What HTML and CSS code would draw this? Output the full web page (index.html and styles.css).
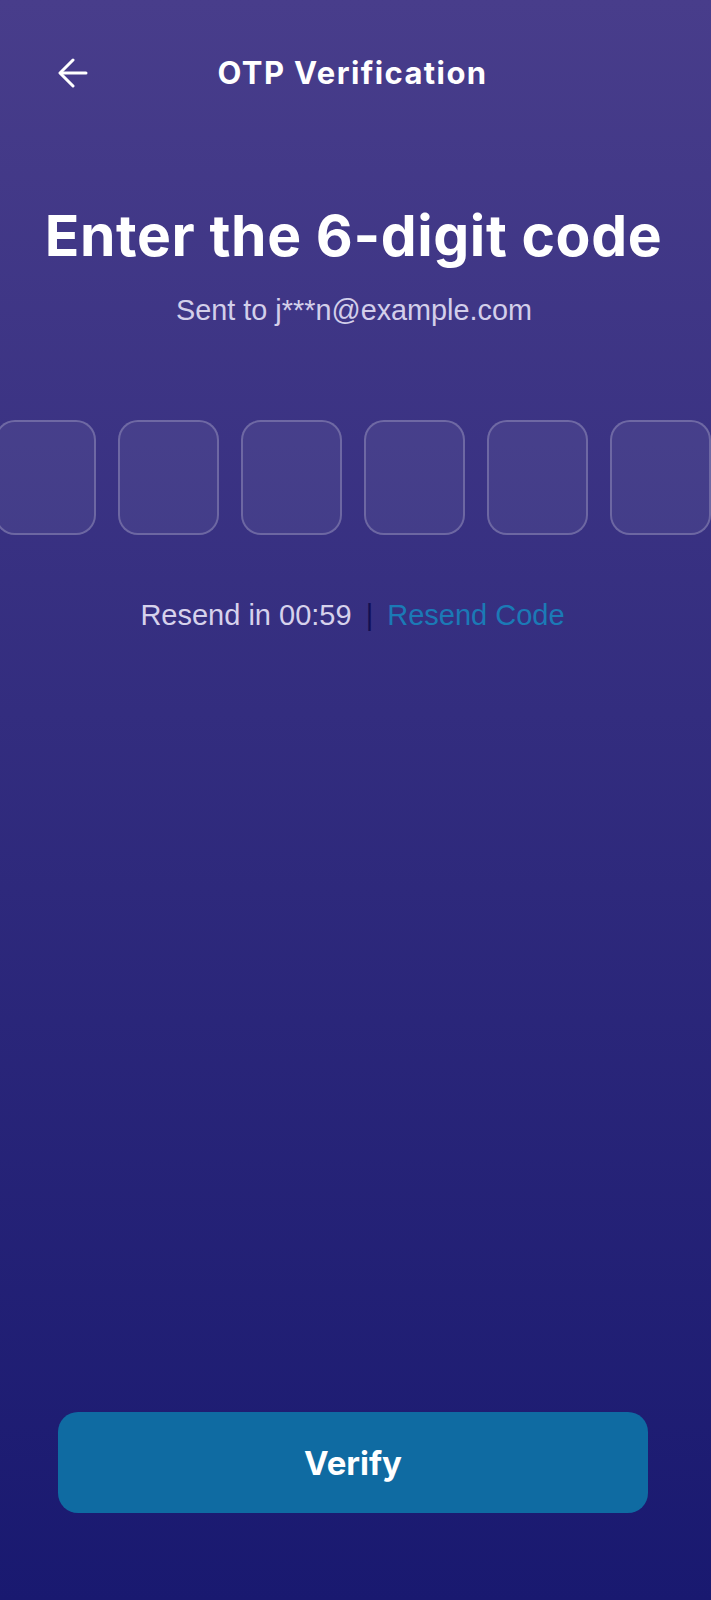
FILE: index.html
```html
<!DOCTYPE html>
<html lang="en">
<head>
<meta charset="utf-8">
<title>OTP Verification</title>
<link rel="stylesheet" href="styles.css">
</head>
<body>
<div class="screen">
  <header class="topbar">
    <button class="back" aria-label="Back">
      <svg width="30" height="30" viewBox="0 0 30 30" fill="none" stroke="#fff" stroke-width="3" stroke-linecap="round" stroke-linejoin="round">
        <path d="M28 15H3"/>
        <path d="M15 2L2 15l13 13"/>
      </svg>
    </button>
    <h1 class="topbar-title">OTP Verification</h1>
    <span class="spacer"></span>
  </header>

  <section class="intro">
    <h2 class="headline">Enter the 6-digit code</h2>
    <p class="sent">Sent to j***n@example.com</p>
  </section>

  <div class="otp-row">
    <div class="otp-box"></div>
    <div class="otp-box"></div>
    <div class="otp-box"></div>
    <div class="otp-box"></div>
    <div class="otp-box"></div>
    <div class="otp-box"></div>
  </div>

  <p class="resend">
    <span class="timer">Resend in 00:59</span>
    <span class="sep">|</span>
    <span class="resend-link">Resend Code</span>
  </p>

  <div class="grow"></div>

  <div class="footer">
    <button class="verify">Verify</button>
  </div>
</div>
</body>
</html>
```

FILE: styles.css
```css
html, body {
  margin: 0;
  padding: 0;
}
body {
  width: 711px;
  height: 1600px;
  overflow: hidden;
  font-family: "Liberation Sans", Arial, sans-serif;
}
.screen {
  height: 1600px;
  display: flex;
  flex-direction: column;
  background: linear-gradient(180deg, #483d8b 0%, #191970 100%);
  overflow: hidden;
}
.topbar {
  display: grid;
  grid-template-columns: 30px 1fr 30px;
  align-items: center;
  padding: 58px 58px 0 58px;
  height: 30px;
}
.back {
  width: 30px;
  height: 30px;
  padding: 0;
  border: 0;
  background: none;
  display: flex;
}
.topbar-title {
  margin: 0;
  text-align: center;
  color: #fff;
  font-family: Inter, "Noto Sans", sans-serif;
  font-weight: 700;
  font-size: 31px;
  line-height: 30px;
  letter-spacing: 1.4px;
  padding-right: 6px;
}
.intro {
  text-align: center;
  margin-top: 113px;
}
.headline {
  margin: 0;
  color: #fff;
  font-family: Inter, "Noto Sans", sans-serif;
  font-weight: 700;
  font-size: 57px;
  line-height: 70px;
  letter-spacing: 0.6px;
  padding-right: 4px;
}
.sent {
  margin: 22px 0 0;
  color: #d3cfea;
  font-size: 28.8px;
  line-height: 34px;
  padding-right: 3px;
}
.otp-row {
  display: flex;
  justify-content: center;
  gap: 22px;
  margin-top: 93px;
  padding-right: 5px;
}
.otp-box {
  flex: 0 0 101px;
  height: 115px;
  box-sizing: border-box;
  border: 2px solid rgba(255, 255, 255, 0.22);
  border-radius: 20px;
  background: rgba(255, 255, 255, 0.06);
}
.resend {
  margin: 63px 0 0;
  text-align: center;
  font-size: 29px;
  line-height: 34px;
  color: #d6d2ec;
  padding-right: 6px;
}
.sep {
  color: #120f52;
  margin: 0 6px;
}
.resend-link {
  color: #1b7ab6;
}
.grow {
  flex: 1;
}
.footer {
  padding: 0 63px 87px 58px;
}
.verify {
  width: 100%;
  height: 101px;
  border: 0;
  border-radius: 20px;
  background: #0f6ba2;
  color: #fff;
  font-family: Inter, "Noto Sans", sans-serif;
  font-weight: 700;
  font-size: 33px;
  display: block;
}
```
